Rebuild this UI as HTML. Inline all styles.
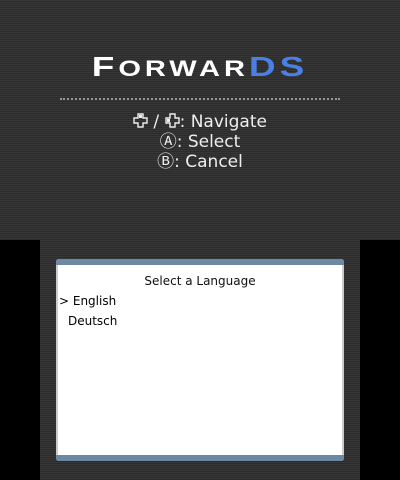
<!DOCTYPE html><html><head><style>
body{margin:0;width:400px;height:480px;position:relative;background:#000;overflow:hidden;font-family:"DejaVu Sans","Liberation Sans",sans-serif}
.str{position:absolute;background:repeating-linear-gradient(#373737 0 1px,#2b2b2b 1px 2px)}
.t{position:absolute;left:0;width:400px;text-align:center;color:#fff}
</style></head><body>
<div class="str" style="left:0;top:0;width:400px;height:240px"></div>
<div class="str" style="left:40px;top:240px;width:320px;height:240px"></div>
<div class="t" style="top:50px;font-family:'Liberation Sans',sans-serif;font-weight:bold;font-size:28px;letter-spacing:3px;line-height:34px;transform:scaleX(1.32);transform-origin:200px 0">F<span style="font-size:22px">ORWAR</span><span style="color:#4a7fe6;font-size:28px">DS</span></div>
<div style="position:absolute;left:60px;top:98px;width:280px;border-top:2px dotted #999"></div>
<div class="t" style="top:112px;font-size:17px;line-height:20px;color:#eee"><svg width="15" height="15" viewBox="0 0 15 15" style="vertical-align:-1px"><path d="M5 1h5v4h4v5h-4v4H5v-4H1V5h4z" fill="none" stroke="#eee" stroke-width="1.4"/><rect x="6" y="2" width="3" height="3" fill="#eee"/></svg> / <svg width="15" height="15" viewBox="0 0 15 15" style="vertical-align:-1px"><path d="M5 1h5v4h4v5h-4v4H5v-4H1V5h4z" fill="none" stroke="#eee" stroke-width="1.4"/><rect x="2" y="6" width="3" height="3" fill="#eee"/></svg>: Navigate<br>Ⓐ: Select<br>Ⓑ: Cancel</div>
<div style="position:absolute;left:56px;top:259px;width:288px;height:202px;background:#fff;border-radius:3px;overflow:hidden;box-shadow:inset 2px 0 #ccc,inset -2px 0 #ccc">
<div style="height:6px;background:#6c88a3"></div>
<div style="position:absolute;bottom:0;left:0;right:0;height:6px;background:#6c88a3"></div>
<div style="position:absolute;top:15px;left:0;right:0;text-align:center;font-size:12px;color:#111">Select a Language</div>
<div style="position:absolute;top:35px;left:3px;font-size:12px;color:#000">&gt; English</div>
<div style="position:absolute;top:55px;left:12px;font-size:12px;color:#000">Deutsch</div>
</div>
</body></html>
